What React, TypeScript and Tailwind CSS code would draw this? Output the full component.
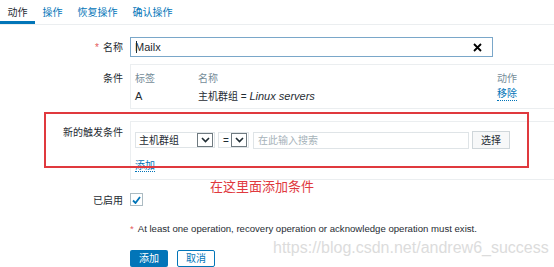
import React from "react";

const Chevron = () => (
  <span className="flex h-[14px] w-[16px] items-center justify-center border border-[#6f7a80] bg-white">
    <svg width="9" height="6" viewBox="0 0 9 6">
      <polyline points="1,1 4.5,4.5 8,1" fill="none" stroke="#1f2c33" strokeWidth="1.6" />
    </svg>
  </span>
);

export default function App() {
  return (
    <div
      className="relative h-[267px] w-[554px] overflow-hidden bg-white text-[10px] text-[#1f2c33]"
      style={{ fontFamily: '"Liberation Sans", "Noto Sans CJK SC", sans-serif' }}
    >
      {/* tabs */}
      <div className="flex h-[25px] items-stretch border-b border-[#ebeef0]">
        <div className="flex items-center border-b-[3px] border-[#0275b8] px-[7.5px] pt-[3px]">动作</div>
        <div className="flex items-center px-[7.5px] text-[#0275b8]">操作</div>
        <div className="flex items-center px-[7.5px] text-[#0275b8]">恢复操作</div>
        <div className="flex items-center px-[7.5px] text-[#0275b8]">确认操作</div>
      </div>

      {/* name */}
      <div className="mt-[12px] grid grid-cols-[130px_1fr]">
        <div className="flex items-center justify-end pr-[7px]">
          <span className="mr-[4px] text-[#e45959]">*</span>名称
        </div>
        <div className="flex h-[20px] w-[363px] items-center border border-[#7aa7c9] pl-[5px] pr-[10px] text-[11px]">
          <span className="-mr-[2px] h-[12px] w-px bg-[#1f2c33]" />
          <span className="flex-1">Mailx</span>
          <svg width="9" height="9" viewBox="0 0 9 9">
            <path d="M1 1L8 8M8 1L1 8" stroke="#000" strokeWidth="1.8" />
          </svg>
        </div>
      </div>

      {/* conditions */}
      <div className="mt-[7px] grid grid-cols-[130px_1fr]">
        <div className="flex justify-end pr-[7px] pt-[7px]">条件</div>
        <div className="-mr-[4px] h-[45px] border border-[#ebeef0] px-[4px] pt-[6px]">
          <div className="grid grid-cols-[63px_299px_1fr] text-[#768d99]">
            <span>标签</span>
            <span>名称</span>
            <span>动作</span>
          </div>
          <div className="mt-[2px] grid grid-cols-[63px_299px_1fr]">
            <span className="text-[11px]">A</span>
            <span>
              主机群组 = <i className="text-[11px]">Linux servers</i>
            </span>
            <span className="self-start justify-self-start border-b border-dotted border-[#0275b8] leading-[12px] text-[#0275b8]">移除</span>
          </div>
        </div>
      </div>

      {/* new condition */}
      <div className="mt-[12px] grid grid-cols-[130px_1fr]">
        <div className="flex justify-end pr-[7px] pt-[4px]">新的触发条件</div>
        <div className="-mr-[4px] h-[59px] border border-[#ebeef0] px-[4px] pt-[10px]">
          <div className="flex h-[16px] items-center">
            <div className="flex h-[16px] w-[80px] items-center justify-between border border-[#dfe4e7] pl-[3px] pr-[1px]">
              <span>主机群组</span>
              <Chevron />
            </div>
            <div className="ml-[3px] flex h-[16px] w-[31px] items-center justify-between border border-[#dfe4e7] pl-[4px] pr-[1px]">
              <span>=</span>
              <Chevron />
            </div>
            <div className="ml-[4px] flex h-[17px] w-[216px] items-center border border-[#dfe4e7] pl-[4px] text-[#a6b2b9]">
              在此输入搜索
            </div>
            <div className="ml-[3px] flex h-[18px] w-[38px] items-center justify-center border border-[#cfd6da] bg-[#f7f8f9]">
              选择
            </div>
          </div>
          <div className="mt-[10px]">
            <span className="border-b border-dotted border-[#0275b8] text-[#0275b8]">添加</span>
          </div>
        </div>
      </div>

      {/* enabled */}
      <div className="mt-[13px] grid grid-cols-[130px_1fr]">
        <div className="flex items-center justify-end pr-[7px]">已启用</div>
        <div className="flex h-[13px] w-[13px] items-center justify-center border border-[#acbbc2] bg-white">
          <svg width="9" height="8" viewBox="0 0 9 8">
            <polyline points="1,4.5 3.5,7 8,1" fill="none" stroke="#0275b8" strokeWidth="1.8" />
          </svg>
        </div>
      </div>

      {/* note */}
      <div className="mt-[14px] pl-[130px] text-[9.6px]">
        <span className="mr-[4px] text-[#e45959]">*</span>
        At least one operation, recovery operation or acknowledge operation must exist.
      </div>

      {/* buttons */}
      <div className="mt-[14px] flex gap-[9px] pl-[130px]">
        <button className="flex h-[17px] w-[38px] items-center justify-center rounded-[2px] bg-[#0275b8] text-white">添加</button>
        <button className="flex h-[17px] w-[38px] items-center justify-center rounded-[2px] border border-[#0275b8] bg-white text-[#0275b8]">取消</button>
      </div>

      {/* annotations */}
      <div className="absolute left-[44px] top-[112px] h-[56px] w-[485px] border-2 border-[#e0393e]" />
      <div className="absolute left-[210px] top-[178px] text-[13px] leading-[17px] text-[#e0393e]">在这里面添加条件</div>
      <div className="absolute left-[273px] top-[238px] text-[16px] leading-[20px] text-[#dcdcdc]">
        https://blog.csdn.net/andrew6_success
      </div>
    </div>
  );
}
